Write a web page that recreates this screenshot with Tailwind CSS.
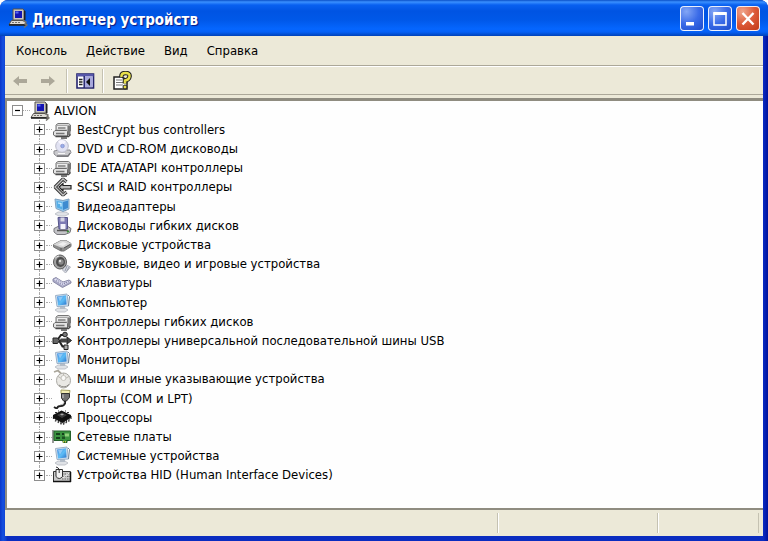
<!DOCTYPE html>
<html lang="ru">
<head>
<meta charset="utf-8">
<title>Диспетчер устройств</title>
<script src="https://cdn.jsdelivr.net/npm/@tailwindcss/browser@4"></script>
</head>
<body class="bg-white font-['DejaVu_Sans_Condensed','DejaVu_Sans','Noto_Sans',sans-serif] text-[13px] text-black">

<svg class="absolute size-0" aria-hidden="true">
  <defs>
    <linearGradient id="screen" x1="0" y1="0" x2="1" y2="1"><stop offset="0" stop-color="#4a8fe0"/><stop offset=".55" stop-color="#5cbcf6"/><stop offset="1" stop-color="#2a70c8"/></linearGradient>
    <linearGradient id="metal" x1="0" y1="0" x2="0" y2="1"><stop offset="0" stop-color="#f4f4f4"/><stop offset="1" stop-color="#9a9a9a"/></linearGradient>
  </defs>
  <symbol id="pc" viewBox="0 0 20 20">
    <path d="M5 1h10l1 1v10H5z" fill="#c9c6c0" stroke="#55524e"/>
    <path d="M7 3h7v7H7z" fill="#1414b4"/><path d="M7.500 3.500h3v2h-3z" fill="#5a6af0"/>
    <path d="M16 2l1.500 1.500V12L16 13z" fill="#222"/>
    <path d="M3.500 12.500h13l2 4H1z" fill="#dedbd5" stroke="#55524e"/>
    <path d="M1 17h17" stroke="#222" stroke-width="1.600"/><path d="M4 14.500h9" stroke="#77736c" stroke-dasharray="2 1"/>
    <path d="M15 12.500l3 1.500-1 2 2 1-3 2.500" fill="none" stroke="#77736c" stroke-width="1.400"/>
  </symbol>
  <symbol id="controller" viewBox="0 0 20 20">
    <path d="M6 3.500h10.500l2 1.500v6H4V5z" fill="#d8d8d8" stroke="#777"/>
    <path d="M4.500 5.500h11v4.500h-11z" fill="#ececec" stroke="#999" stroke-width=".8"/><path d="M6 8h7.500" stroke="#777" stroke-width="1.400"/>
    <path d="M16 5.500h2.500V15H16z" fill="#777"/>
    <path d="M3 10.500h11.500l1 1V16H3l-1.500-1v-3z" fill="#e4e4e4" stroke="#6a6a6a"/>
    <path d="M4 13.500h8.500" stroke="#777" stroke-width="1.500"/>
    <path d="M3.500 16.500h13l2-2" fill="none" stroke="#4a4a4a" stroke-width="1.400"/><path d="M9 17h6v2H9z" fill="#777"/>
  </symbol>
  <symbol id="cd" viewBox="0 0 20 20">
    <path d="M2 12l5-1h11l1 2.500-3 4H5l-3-2.500z" fill="#c9c9cd" stroke="#8b8b90"/>
    <path d="M5 17h11l2-3" stroke="#77777b" stroke-width="1.300" fill="none"/>
    <circle cx="10" cy="7" r="6.300" fill="#e1e2f2" stroke="#b9bac8"/><path d="M10 7L6 2.500a6 6 0 018 .2z" fill="#f8f6ff"/>
    <circle cx="10.500" cy="7" r="1.800" fill="#9ab1ea" stroke="#7f86c8" stroke-width=".7"/>
    <path d="M6 14.500h7" stroke="#f8f8f8"/>
  </symbol>
  <symbol id="scsi" viewBox="0 0 20 20">
    <path d="M14.500 5L11 2 3 10l8 8 3.500-3" fill="none" stroke="#333" stroke-width="3.200" stroke-linejoin="bevel"/>
    <path d="M14.500 5L11 2 3 10l8 8 3.500-3" fill="none" stroke="#c4c4c4" stroke-width="1.300"/>
    <path d="M7 10l4-3.500V8.500h8v3.500h-8v2z" fill="#bbb" stroke="#222" stroke-width="1.200"/>
  </symbol>
  <symbol id="screenpc" viewBox="0 0 20 20">
    <path d="M6 15h7l3 2-3 2H6l-3-2z" fill="#dfe2e6" stroke="#b5b9c0" stroke-width=".8"/><path d="M8 12h5v4H8z" fill="#b4bdc8"/>
    <path d="M3.500 2.500L15 1l1.500 12L5 13.500z" fill="#d5e4f2" stroke="#9bb0c6"/>
    <path d="M5 3.500L14 2.300l.6 9.200-8.600 1z" fill="url(#screen)"/><path d="M6 4l5-.6-3 5z" fill="#b5dcfb" opacity=".6"/>
    <path d="M16 2l1.500 1.500-1 9.500" fill="none" stroke="#778899"/>
  </symbol>
  <symbol id="adapter" viewBox="0 0 20 20">
    <path d="M6 15h8l3 2-4 2H7l-4-2z" fill="#dfe2e6" stroke="#b5b9c0" stroke-width=".8"/>
    <path d="M3 2l8 1.500L17 2v10l-6 2.500-7-3z" fill="#93c8ed" stroke="#7fa1c0"/>
    <path d="M4.500 4l6 1v7.500l-5.500-2z" fill="#55aee8"/><path d="M11 5l5-1.500v7.500l-5 2z" fill="#3e8bd0"/>
    <path d="M6 6l3 .5v3" fill="none" stroke="#d4f0ff" stroke-width="1.200"/>
  </symbol>
  <symbol id="floppy" viewBox="0 0 20 20">
    <path d="M2 12.500l4-2h10l3 2-1 4-5 2H5l-3-2.500z" fill="#c4c4c8" stroke="#77777c"/>
    <path d="M6 1.500h9.500V13H7z" fill="#7d7bb4" stroke="#55548a"/><path d="M8.500 1.500h4v4h-4z" fill="#d6d6e4"/><path d="M8.500 8h5v5h-5z" fill="#f3f3fa"/>
    <path d="M5 14.500h11" stroke="#555" stroke-width="1.500"/><path d="M15 16l2-1" stroke="#3c8f3c" stroke-width="1.500"/>
  </symbol>
  <symbol id="disk" viewBox="0 0 20 20">
    <path d="M1.500 9.500L9 5.500h5l5 3v3l-7 4.500h-3l-7.500-4z" fill="#8c8c8c" stroke="#777"/>
    <path d="M1.500 9.500L9 5.500h5l5 3-7 4H9z" fill="#d6d6d6"/><path d="M6 9.500l5-2.500 4 1.500-4 2.500z" fill="#efefef"/>
    <path d="M9 13v2.500M12 13l6-3.500" stroke="#555"/>
  </symbol>
  <symbol id="speaker" viewBox="0 0 20 20">
    <path d="M12.500 10l6 3-5 6-3-3z" fill="#d8dbe4" stroke="#b0b3bc"/><path d="M15 12l-2 5M17 13l-2.500 4.500" stroke="#999eaa"/>
    <ellipse cx="8" cy="8" rx="6.500" ry="7" fill="#a2a2a2" stroke="#5a5a5a"/>
    <ellipse cx="8.500" cy="8" rx="4.500" ry="5" fill="#4c4c4c"/><circle cx="9" cy="8" r="2.700" fill="#898989"/><circle cx="8" cy="7" r="1.200" fill="#ddd"/>
    <path d="M3 4.500q1.500-2.500 4-2.500" fill="none" stroke="#eee"/>
  </symbol>
  <symbol id="keyboard" viewBox="0 0 20 20">
    <path d="M1 6l3-1.500L11 9l6-2 2 1.500v1.500l-8.500 4.500L1 8.500z" fill="#a9a9c6" stroke="#8a8aa8"/>
    <path d="M2 6.500l2.500-1.200 6.500 4.200 6-1.800 1 1L10.500 12.500z" fill="#e2e2f3"/>
    <path d="M4 7.500l6.500 4L17 8.500M4.500 6l6.500 4.500 4-1.500" fill="none" stroke="#8484a9" stroke-dasharray="1.300 1"/>
  </symbol>
  <symbol id="usb" viewBox="0 0 20 20">
    <path d="M3 9.500h13M5 9.500l4-5.500h4M7 9.500l3.500 6H13" fill="none" stroke="#222" stroke-width="2"/>
    <path d="M1 7h4.500l2 2.500-2 3H1z" fill="#666" stroke="#222"/><path d="M15 6l4.500 3.500L15 13z" fill="#444" stroke="#222"/>
    <circle cx="13" cy="3.500" r="2.300" fill="#777" stroke="#222"/><path d="M12 14h4v4.500h-4z" fill="#aaa" stroke="#222"/><path d="M8.500 7.500H15v4H8.500z" fill="#444"/>
  </symbol>
  <symbol id="mouse" viewBox="0 0 20 20">
    <path d="M2 3l4-1.500 3 3" fill="none" stroke="#aaa69b" stroke-width="1.800"/>
    <ellipse cx="11.500" cy="11.500" rx="7" ry="7.500" fill="#e9e8e4" stroke="#aaa9a4"/>
    <path d="M6 7.500q5 4 11 0M11.500 9V4" fill="none" stroke="#bbb9b2"/><circle cx="11.500" cy="9" r="2.500" fill="#fafaf8" stroke="#c4c2bc"/><path d="M7 16q5 4 10-.5" fill="none" stroke="#8d8b86"/>
  </symbol>
  <symbol id="port" viewBox="0 0 20 20">
    <path d="M9 1l9 .5-.5 3H9z" fill="#f2edb2" stroke="#a49f60"/><path d="M9.500 4.500h8v4L14.500 12h-3l-2-3z" fill="#707070" stroke="#333"/><path d="M11 5.500v3.500" stroke="#ccc"/>
    <path d="M13 12v2.500q-1 2.500-4 2.500T5.500 18.500 2 18" fill="none" stroke="#222" stroke-width="2"/>
    <path d="M12.500 13q-1 3-4.500 3" fill="none" stroke="#999" stroke-width=".7"/>
  </symbol>
  <symbol id="cpu" viewBox="0 0 20 20">
    <path d="M1.500 8v3M4 9.500v3M6.500 11v3M9 12.500v3M12 12.500v3M14.500 11v3M17 9.500v3M19 8v3" stroke="#333" stroke-width="1.200"/>
    <path d="M1 7l8.500-4.500L19 7v2.500L10.500 15 1 10z" fill="#111"/><path d="M5 7l5-2.500L15 7l-5 3z" fill="#3c3c3c"/><path d="M8 6.500l2-1 2 1-2 1z" fill="#aaa"/>
    <path d="M3 4.500h2M15 4.500h2M6 3h1M13 3h1" stroke="#333" stroke-width="1.200"/>
    <path d="M3 12.500l7.500 4 7-4" fill="none" stroke="#444" stroke-dasharray="1.500 1.500" stroke-width="1.500"/>
  </symbol>
  <symbol id="nic" viewBox="0 0 20 20">
    <path d="M1 3v13" stroke="#777" stroke-width="1.500"/><path d="M2 4h16.500v9.500H15v2h-4v-2H2z" fill="#3b9440" stroke="#24602a"/>
    <path d="M4 6h4v2H4zM4 10h4v2H4zM10 6h2v2h-2z" fill="#163f1c"/><path d="M13 6.500h4v3h-4z" fill="#8fd07a"/><path d="M10 9.500h3v2.500h-3z" fill="#1b5222"/><path d="M11.500 14v1.500M13.500 14v1.500" stroke="#d6c84a"/>
  </symbol>
  <symbol id="hid" viewBox="0 0 20 20">
    <path d="M1.500 6.500h17v10h-17z" fill="#c8c8c8" stroke="#333"/><path d="M10 9h8M10 11.500h8M10 14h8" stroke="#666" stroke-dasharray="1.500 1"/><path d="M1 16.500h18M18.500 7v10" stroke="#111" stroke-width="1.500"/>
    <path d="M4 4.500h6.500v7q-3.200 4-6.500 0z" fill="#f2f2f2" stroke="#333"/><path d="M7.200 4.500v3.500M7.200 4.500Q6.500 2.500 4 2" fill="none" stroke="#333"/><path d="M11 13l6-5" stroke="#eee"/>
  </symbol>
</svg>

<div class="flex min-h-screen flex-col rounded-t-lg bg-[#0a2cc0] px-[5px] pb-[5px] [background-image:linear-gradient(90deg,#0a35c8_0,#1450e0_3px,#0f3ed0_6px,transparent_7px,transparent_calc(100%-6px),#0a2cc4_calc(100%-5px),#00129c_100%)]">
  <header class="-mx-[5px] flex h-9 shrink-0 items-center gap-1 rounded-t-lg bg-[linear-gradient(#0a50c8_0,#3a90ff_2px,#0860f0_5px,#0054e3_11px,#0058e8_20px,#0566ff_29px,#0560f5_32px,#0042b8_36px)] pr-2 pl-2">
    <svg class="size-5 shrink-0"><use href="#pc"/></svg>
    <h1 class="flex-1 pt-1 text-[15px] leading-5 font-bold text-white [text-shadow:1px_1px_1px_#0a1883]">Диспетчер устройств</h1>
    <button aria-label="Свернуть" class="h-[25px] w-6 rounded border border-white/90 bg-[radial-gradient(circle_at_25%_20%,#83a6f5,#3a6be8_50%,#1d4ccc)]"><svg class="h-full w-full" viewBox="0 0 22 23"><path d="M5 15h8v3.500H5z" fill="#fff"/></svg></button>
    <button aria-label="Развернуть" class="h-[25px] w-6 rounded border border-white/90 bg-[radial-gradient(circle_at_25%_20%,#83a6f5,#3a6be8_50%,#1d4ccc)]"><svg class="h-full w-full" viewBox="0 0 22 23"><path d="M5 6h12v12H5z" fill="none" stroke="#fff" stroke-width="1.500"/><path d="M4.500 6.500h13" stroke="#fff" stroke-width="3"/></svg></button>
    <button aria-label="Закрыть" class="h-[25px] w-6 rounded border border-white/90 bg-[radial-gradient(circle_at_25%_20%,#f0a58c,#dc5a38_50%,#c23a18)]"><svg class="h-full w-full" viewBox="0 0 22 23"><path d="M5.500 6l11 11.500M16.500 6l-11 11.500" stroke="#fff" stroke-width="2.400"/></svg></button>
  </header>

  <div class="flex flex-1 flex-col bg-[#ece9d8]">
    <nav class="flex h-[30px] items-center gap-[19px] border-b border-[#aca899] pl-[11px]">
      <button>Консоль</button><button>Действие</button><button>Вид</button><button>Справка</button>
    </nav>
    <div class="flex h-[29px] items-center border-t border-b border-t-white border-b-[#aca899] pl-[7px]" role="toolbar">
      <button aria-label="Назад" class="w-7"><svg class="h-4 w-4" viewBox="0 0 16 16"><path d="M1 8l6-5v3h8v4H7v3z" fill="#aca899"/></svg></button>
      <button aria-label="Вперёд" class="w-7"><svg class="h-4 w-4" viewBox="0 0 16 16"><path d="M15 8L9 3v3H1v4h8v3z" fill="#aca899"/></svg></button>
      <span class="mr-2 -ml-[2px] h-6 w-[2px] border-r border-l border-r-white border-l-[#c5c2b2]"></span>
      <button aria-label="Показать дерево консоли" class="w-[26px]"><svg class="h-4 w-[19px]" viewBox="0 0 19 16"><path d="M1 1h16.500v14H1z" fill="#fff" stroke="#24246e" stroke-width="1.600"/><path d="M1 1h16.500v2.500H1z" fill="#5656a8"/><path d="M8.500 3.500h8.500V14H8.500z" fill="#a8a8dc"/><path d="M8.200 3v12" stroke="#24246e" stroke-width="1.500"/><path d="M3 6.500h3.500M3 9h3.500M3 11.500h3.500" stroke="#222" stroke-width="1.300"/><path d="M14 5v8l-4-4z" fill="#111"/></svg></button>
      <span class="mr-2 h-6 w-[2px] border-r border-l border-r-white border-l-[#c5c2b2]"></span>
      <button aria-label="Справка" class="w-7"><svg class="size-5" viewBox="0 0 20 20"><path d="M2 6h8l5 3v9H2z" fill="#fff" stroke="#222" stroke-width="1.500"/><path d="M4 9h6M4 11.500h8M4 14h7" stroke="#777"/><path d="M9.500 6q-.5-4 4-4t4 3.500-4.500 4v3" fill="none" stroke="#222" stroke-width="4.600"/><path d="M9.500 6q-.5-4 4-4t4 3.500-4.500 4v3" fill="none" stroke="#e8e04a" stroke-width="2.500"/><circle cx="13" cy="16" r="2" fill="#e8e04a" stroke="#222"/></svg></button>
    </div>
    <main class="mt-[3px] flex flex-1 flex-col border-t-[3px] border-b-2 border-l-2 border-t-[#8f8c80] border-b-[#8f8c80] border-l-[#8f8c80] bg-[#fefefe] pb-[23px]">
      <ul id="tree" role="tree" class="flex flex-1 flex-col pl-1">
        <li class="flex flex-1 flex-col" role="treeitem" aria-expanded="true">
          <div class="flex flex-1 basis-0 items-center">
            <button aria-label="Свернуть ALVION" class="ml-[1px] size-[11px] shrink-0 border border-[#8d8d8d] bg-white"><svg class="size-[9px]" viewBox="0 0 9 9"><path d="M2 4.500h5" stroke="#000" stroke-width="1.200"/></svg></button>
            <span class="w-[7px] border-t border-dotted border-[#aaa]"></span>
            <svg class="-my-1 size-5 shrink-0"><use href="#pc"/></svg>
            <span class="pl-1 leading-4">ALVION</span>
          </div>
          <ul id="devices" role="group" class="flex flex-[19] basis-0 flex-col pl-[22px]"></ul>
        </li>
      </ul>
    </main>
    <footer class="flex h-[26px] py-[3px]">
      <span class="flex-1 border-r border-[#c5c2b2]"></span>
      <span class="w-40 border-r border-l border-r-[#c5c2b2] border-l-white"></span>
      <span class="mr-1 w-[101px] border-r border-l border-r-[#c5c2b2] border-l-white"></span>
    </footer>
  </div>
</div>

<script>
const devices = [
  ['controller', 'BestCrypt bus controllers'],
  ['cd', 'DVD и CD-ROM дисководы'],
  ['controller', 'IDE ATA/ATAPI контроллеры'],
  ['scsi', 'SCSI и RAID контроллеры'],
  ['adapter', 'Видеоадаптеры'],
  ['floppy', 'Дисководы гибких дисков'],
  ['disk', 'Дисковые устройства'],
  ['speaker', 'Звуковые, видео и игровые устройства'],
  ['keyboard', 'Клавиатуры'],
  ['screenpc', 'Компьютер'],
  ['controller', 'Контроллеры гибких дисков'],
  ['usb', 'Контроллеры универсальной последовательной шины USB'],
  ['screenpc', 'Мониторы'],
  ['mouse', 'Мыши и иные указывающие устройства'],
  ['port', 'Порты (COM и LPT)'],
  ['cpu', 'Процессоры'],
  ['nic', 'Сетевые платы'],
  ['screenpc', 'Системные устройства'],
  ['hid', 'Устройства HID (Human Interface Devices)'],
];
document.getElementById('devices').innerHTML = devices.map(([icon, name]) => `
  <li role="treeitem" aria-expanded="false" class="group flex flex-1 basis-0 items-center">
    <span class="flex w-[13px] shrink-0 flex-col items-center self-stretch">
      <span class="flex-1 border-l border-dotted border-[#aaa]"></span>
      <button aria-label="Развернуть ${name}" class="size-[11px] shrink-0 border border-[#8d8d8d] bg-white"><svg class="size-[9px]" viewBox="0 0 9 9"><path d="M1.500 4.500h6M4.500 1.500v6" stroke="#000" stroke-width="1.200"/></svg></button>
      <span class="flex-1 border-l border-dotted border-[#aaa] group-last:invisible"></span>
    </span>
    <span class="w-[6px] border-t border-dotted border-[#aaa]"></span>
    <svg class="-my-1 size-5 shrink-0"><use href="#${icon}"/></svg>
    <span class="pl-[5px] leading-4">${name}</span>
  </li>`).join('');
</script>
</body>
</html>
